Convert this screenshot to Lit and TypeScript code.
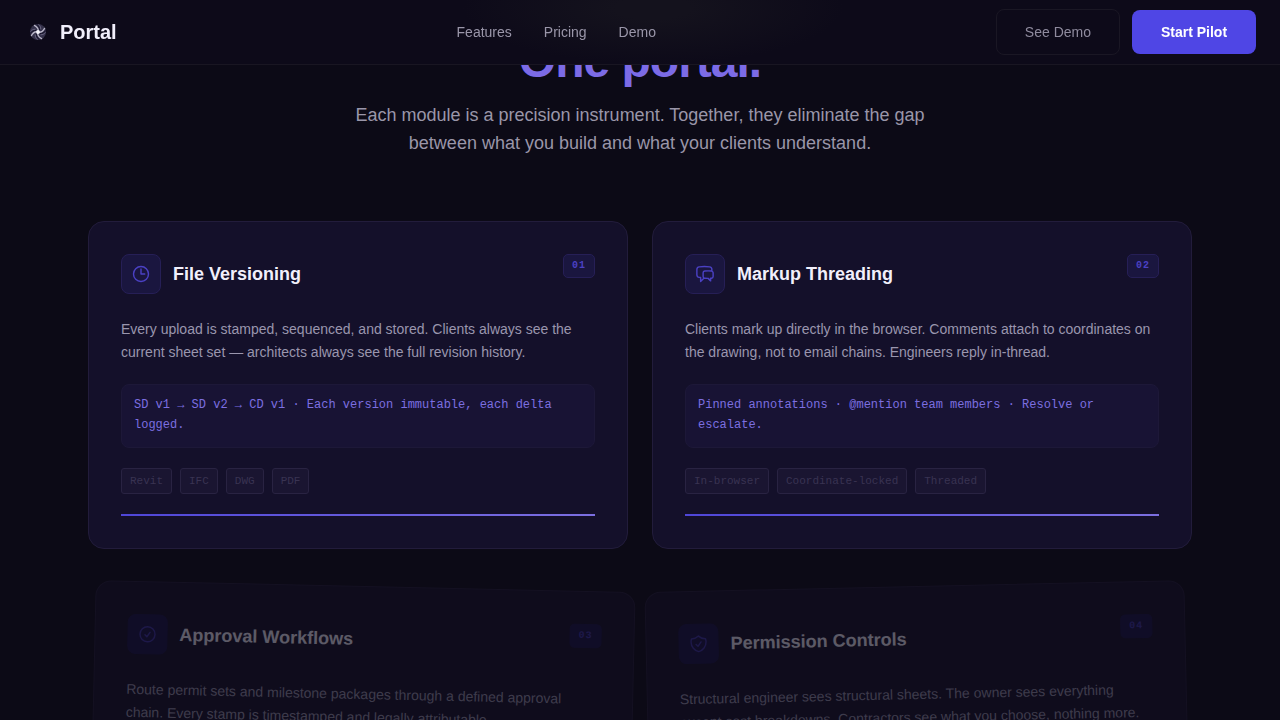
import { LitElement, html, svg, css } from "lit";
import { customElement, property } from "lit/decorators.js";
import { classMap } from "lit/directives/class-map.js";

interface Module {
  index: string;
  icon: string;
  title: string;
  text: string;
  detail: string;
  tags: string[];
  entering?: "left" | "right";
}

const ICONS: Record<string, string> = {
  clock: "M12 6v6h4.5m4.5 0a9 9 0 1 1-18 0 9 9 0 0 1 18 0Z",
  chat: "M20.25 8.511c.884.284 1.5 1.128 1.5 2.097v4.286c0 1.136-.847 2.1-1.98 2.193-.34.027-.68.052-1.02.072v3.091l-3-3c-1.354 0-2.694-.055-4.02-.163a2.115 2.115 0 0 1-.825-.242m9.345-8.334a2.126 2.126 0 0 0-.476-.095 48.64 48.64 0 0 0-8.048 0c-1.131.094-1.976 1.057-1.976 2.192v4.286c0 .837.46 1.58 1.155 1.951m9.345-8.334V6.637c0-1.621-1.152-3.026-2.76-3.235A48.455 48.455 0 0 0 11.25 3c-2.115 0-4.198.137-6.24.402-1.608.209-2.76 1.614-2.76 3.235v6.226c0 1.621 1.152 3.026 2.76 3.235.577.075 1.157.14 1.74.194V21l4.155-4.155",
  check: "M9 12.75 11.25 15 15 9.75M21 12a9 9 0 1 1-18 0 9 9 0 0 1 18 0Z",
  shield: "M9 12.75 11.25 15 15 9.75m-3-7.036A11.959 11.959 0 0 1 3.598 6 11.99 11.99 0 0 0 3 9.749c0 5.592 3.824 10.29 9 11.623 5.176-1.332 9-6.03 9-11.622 0-1.31-.21-2.571-.598-3.751h-.152c-3.196 0-6.1-1.248-8.25-3.285Z",
};

const MODULES: Module[] = [
  {
    index: "01",
    icon: "clock",
    title: "File Versioning",
    text: "Every upload is stamped, sequenced, and stored. Clients always see the current sheet set — architects always see the full revision history.",
    detail: "SD v1 → SD v2 → CD v1 · Each version immutable, each delta logged.",
    tags: ["Revit", "IFC", "DWG", "PDF"],
  },
  {
    index: "02",
    icon: "chat",
    title: "Markup Threading",
    text: "Clients mark up directly in the browser. Comments attach to coordinates on the drawing, not to email chains. Engineers reply in-thread.",
    detail: "Pinned annotations · @mention team members · Resolve or escalate.",
    tags: ["In-browser", "Coordinate-locked", "Threaded"],
  },
  {
    index: "03",
    icon: "check",
    title: "Approval Workflows",
    text: "Route permit sets and milestone packages through a defined approval chain. Every stamp is timestamped and legally attributable.",
    detail: "",
    tags: [],
    entering: "left",
  },
  {
    index: "04",
    icon: "shield",
    title: "Permission Controls",
    text: "Structural engineer sees structural sheets. The owner sees everything except cost breakdowns. Contractors see what you choose, nothing more.",
    detail: "",
    tags: [],
    entering: "right",
  },
];

@customElement("module-card")
class ModuleCard extends LitElement {
  @property({ attribute: false }) module!: Module;

  static styles = css`
    :host {
      display: block;
    }
    .card {
      box-sizing: border-box;
      height: 100%;
      min-height: 328px;
      padding: 32px;
      border: 1px solid #221c3b;
      border-radius: 16px;
      background: #14102a;
      display: flex;
      flex-direction: column;
      gap: 20px;
    }
    .entering {
      opacity: 0.35;
      background: #151029;
      border-color: #241e38;
    }
    .left {
      transform: translate(4px, 13px) rotate(1.27deg);
    }
    .right {
      transform: translate(-4px, 13px) rotate(-1.27deg);
    }
    .head {
      display: flex;
      align-items: flex-start;
      justify-content: space-between;
      margin-bottom: 4px;
    }
    .name {
      display: flex;
      align-items: center;
      gap: 12px;
    }
    .icon {
      box-sizing: border-box;
      width: 40px;
      height: 40px;
      border: 1px solid #261f56;
      border-radius: 8px;
      background: #1a163f;
      color: #4b41c4;
      display: grid;
      place-items: center;
    }
    .icon svg {
      width: 20px;
      height: 20px;
    }
    .entering .icon,
    .entering .index {
      background: #1a1548;
      border-color: #1a1548;
      color: #3d33a8;
    }
    .title {
      margin: 0;
      font-size: 18px;
      line-height: 24px;
      font-weight: 700;
      color: #f1effb;
    }
    .index {
      padding: 3px 8px;
      border: 1px solid #261f56;
      border-radius: 5px;
      background: #1a163f;
      color: #4b41c4;
      font: 700 10px/16px "Liberation Mono", monospace;
      letter-spacing: 1px;
    }
    .text {
      margin: 0;
      font-size: 14px;
      line-height: 23px;
      color: #9a96ae;
    }
    .detail {
      margin: 0;
      padding: 10px 12px 12px;
      border: 1px solid #1d1838;
      border-radius: 8px;
      background: #181334;
      color: #7c6fe0;
      font: 12px/20px "Liberation Mono", monospace;
    }
    .tags {
      margin: 0;
      padding: 0;
      list-style: none;
      display: flex;
      flex-wrap: wrap;
      gap: 8px;
    }
    .tag {
      padding: 4px 8px;
      border: 1px solid #292342;
      border-radius: 3px;
      background: #1a1531;
      color: #393352;
      font: 11px/16px "Liberation Mono", monospace;
    }
    .bar {
      height: 2px;
      background: linear-gradient(90deg, #4f46d8, #7c6fe0);
    }
  `;

  render() {
    const m = this.module;
    return html`
      <article
        class=${classMap({
          card: true,
          entering: !!m.entering,
          left: m.entering === "left",
          right: m.entering === "right",
        })}
      >
        <div class="head">
          <div class="name">
            <span class="icon">
              <svg viewBox="0 0 24 24" fill="none" stroke="currentColor" stroke-width="1.7" stroke-linecap="round" stroke-linejoin="round" aria-hidden="true">
                ${svg`<path d=${ICONS[m.icon]}></path>`}
              </svg>
            </span>
            <h3 class="title">${m.title}</h3>
          </div>
          <span class="index">${m.index}</span>
        </div>
        <p class="text">${m.text}</p>
        ${m.detail ? html`<p class="detail">${m.detail}</p>` : null}
        ${m.tags.length
          ? html`<ul class="tags">${m.tags.map((t) => html`<li class="tag">${t}</li>`)}</ul>
              <div class="bar"></div>`
          : null}
      </article>
    `;
  }
}

@customElement("app-root")
class AppRoot extends LitElement {
  static styles = css`
    :host {
      display: block;
      height: 100vh;
      overflow-y: auto;
      scrollbar-width: none;
      background: #0c0a16;
      color: #9a96a9;
      font-family: "Liberation Sans", Arial, sans-serif;
    }
    .nav {
      position: fixed;
      inset: 0 0 auto;
      z-index: 1;
      box-sizing: border-box;
      height: 65px;
      padding: 0 24px;
      border-bottom: 1px solid #191622;
      background: radial-gradient(ellipse 190px 56px at 51% 8px, #14121d 20%, #0d0a19 100%);
      display: flex;
      align-items: center;
      justify-content: space-between;
    }
    .brand {
      display: flex;
      align-items: center;
      gap: 8px;
      color: #f1effb;
      font-size: 20px;
      line-height: 28px;
      font-weight: 700;
      text-decoration: none;
    }
    .brand svg {
      width: 28px;
      height: 28px;
    }
    .links {
      display: flex;
      gap: 32px;
    }
    .link {
      color: #9a96a9;
      font-size: 14px;
      line-height: 20px;
      text-decoration: none;
    }
    .actions {
      display: flex;
      align-items: center;
      gap: 12px;
    }
    .button {
      min-width: 124px;
      padding: 14px 28px;
      border: 0;
      border-radius: 8px;
      background: #4f46e5;
      color: #ffffff;
      font: 700 14px/16px "Liberation Sans", Arial, sans-serif;
    }
    .ghost {
      border: 1px solid #1a1724;
      background: transparent;
      color: #8f8b9e;
      font-weight: 400;
    }
    .section {
      max-width: 1104px;
      margin: 0 auto;
      padding: 32px 24px 96px;
    }
    .intro {
      max-width: 600px;
      margin: 0 auto 64px;
      text-align: center;
    }
    .heading {
      margin: 0 0 11px;
      color: #7c6be6;
      font-size: 48px;
      line-height: 58px;
      font-weight: 700;
      letter-spacing: -1px;
    }
    .lead {
      margin: 0;
      font-size: 18px;
      line-height: 28px;
    }
    .grid {
      display: grid;
      grid-template-columns: 1fr 1fr;
      gap: 24px;
    }
  `;

  render() {
    return html`
      <header class="nav">
        <a class="brand" href="#">
          <svg viewBox="0 0 28 28" fill="none" aria-hidden="true">
            <circle cx="14" cy="14" r="8" fill="#34314a" />
            ${[0, 90, 180, 270].map(
              (a) => svg`<g transform="rotate(${a} 14 14)">
                <path d="M14.2 13.4C14.6 11 13.4 9 10.4 7.4" stroke="#b9b6c8" stroke-width="1.3" stroke-linecap="round"></path>
                <path d="M15.6 12.2C15.8 9.8 14.6 7.8 12.6 6.4" stroke="#16132a" stroke-width="1"></path>
                <path d="M16.8 11.4C16.8 9.2 16 7.6 14.6 6.4" stroke="#6d6984" stroke-width=".9"></path>
              </g>`
            )}
            <circle cx="14" cy="14" r="1.9" fill="#f5f4fb" />
          </svg>
          <span>Portal</span>
        </a>
        <nav class="links">
          <a class="link" href="#features">Features</a>
          <a class="link" href="#pricing">Pricing</a>
          <a class="link" href="#demo">Demo</a>
        </nav>
        <div class="actions">
          <button class="button ghost" type="button">See Demo</button>
          <button class="button" type="button">Start Pilot</button>
        </div>
      </header>
      <main class="section" id="features">
        <div class="intro">
          <h2 class="heading">One portal.</h2>
          <p class="lead">
            Each module is a precision instrument. Together, they eliminate the gap between what
            you build and what your clients understand.
          </p>
        </div>
        <div class="grid">
          ${MODULES.map((m) => html`<module-card .module=${m}></module-card>`)}
        </div>
      </main>
    `;
  }
}
